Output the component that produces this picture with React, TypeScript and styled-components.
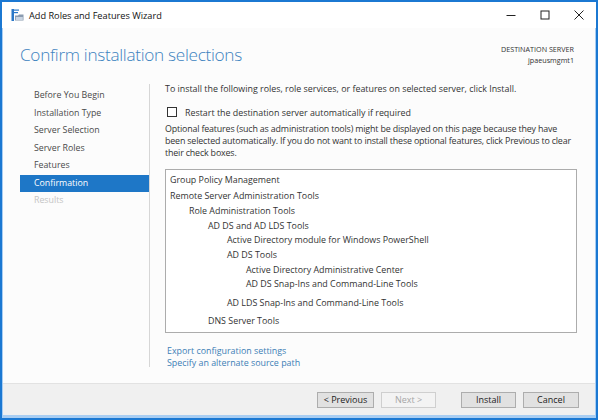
import React from 'react';
import styled, { createGlobalStyle } from 'styled-components';

const GlobalStyle = createGlobalStyle`
  html, body {
    margin: 0;
    padding: 0;
    background: #ffffff;
  }
  body {
    font-family: 'Open Sans', 'Noto Sans', 'Liberation Sans', sans-serif;
  }
`;

const Frame = styled.div`
  width: 598px;
  height: 420px;
  box-sizing: border-box;
  border: 2px solid #1b78d2;
  display: flex;
  flex-direction: column;
  background: #ffffff;
`;

const TitleBar = styled.div`
  height: 26px;
  flex: none;
  display: flex;
  align-items: center;
  background: #ffffff;
  padding-left: 9px;
`;

const TitleText = styled.span`
  font-size: 9.2px;
  color: #111111;
  margin-left: 5px;
`;

const WindowControls = styled.div`
  margin-left: auto;
  display: flex;
  height: 100%;
`;

const ControlButton = styled.div`
  width: 34px;
  height: 100%;
  display: flex;
  align-items: center;
  justify-content: center;
`;

const Window = styled.div`
  flex: 1;
  display: flex;
  flex-direction: column;
  border: 1px solid #a8cdf2;
  border-top: none;
  border-bottom-width: 3px;
  min-height: 0;
`;

const Header = styled.div`
  height: 48px;
  flex: none;
  display: flex;
  align-items: flex-start;
  justify-content: space-between;
  padding: 0 21px 0 17px;
  background: #fcfcfc;
`;

const PageTitle = styled.h1`
  margin: 15px 0 0;
  font-size: 17.2px;
  font-weight: 300;
  letter-spacing: -0.3px;
  color: #3d83bf;
  line-height: 24px;
`;

const Destination = styled.div`
  margin-top: 16px;
  text-align: right;
  font-size: 7.2px;
  line-height: 11px;
  color: #333333;
`;

const Main = styled.div`
  flex: 1;
  display: flex;
  background: #fcfcfc;
  min-height: 0;
`;

const Nav = styled.nav`
  width: 146px;
  flex: none;
  padding-top: 11px;
  box-sizing: border-box;
`;

const NavItem = styled.div<{ $active?: boolean; $disabled?: boolean }>`
  margin-left: 17px;
  padding-left: 14px;
  height: 17.5px;
  line-height: 17.5px;
  font-size: 8.8px;
  background: ${({ $active }) => ($active ? '#1e77c7' : 'transparent')};
  color: ${({ $active, $disabled }) =>
    $active ? '#ffffff' : $disabled ? '#c4c4c4' : '#4a4a4a'};
`;

const Divider = styled.div`
  width: 1px;
  flex: none;
  background: #d6d6d6;
  margin: 8px 0 16px;
`;

const Content = styled.div`
  flex: 1;
  padding: 7px 18px 0 15px;
  font-size: 8.9px;
  color: #333333;
  min-width: 0;
`;

const Line = styled.div`
  line-height: 12px;
  white-space: nowrap;
`;

const CheckRow = styled.label`
  display: flex;
  align-items: center;
  height: 12px;
  margin-top: 11px;
  padding-left: 2px;
`;

const CheckBox = styled.span`
  width: 8px;
  height: 8px;
  border: 1px solid #333333;
  background: #ffffff;
  margin-right: 8px;
`;

const Paragraph = styled.p`
  margin: 5px 0 0;
  line-height: 12px;
  letter-spacing: -0.17px;
`;

const ListBox = styled.div`
  margin-top: 10px;
  height: 164px;
  box-sizing: border-box;
  border: 1px solid #acacac;
  background: #ffffff;
  padding: 3px 0 0 4px;
`;

const Node = styled.div<{ $top?: boolean }>`
  margin-bottom: ${({ $top }) => ($top ? '1.5px' : '0')};
`;

const NodeLabel = styled.div`
  height: 14.7px;
  line-height: 14.7px;
  white-space: nowrap;
`;

const Children = styled.div`
  padding-left: 19px;
  padding-bottom: 3.5px;
`;

const Links = styled.div`
  margin-top: 12px;
  padding-left: 2px;
`;

const Link = styled.a`
  display: block;
  line-height: 12px;
  color: #3c7fb6;
  text-decoration: none;
`;

const Footer = styled.div`
  height: 32px;
  flex: none;
  box-sizing: border-box;
  border-top: 1px solid #e2e2e2;
  background: #f0f0f0;
  display: flex;
  align-items: center;
  justify-content: flex-end;
  padding-right: 16px;
`;

const Button = styled.button<{ $width: number; $gap: number }>`
  width: ${({ $width }) => $width}px;
  height: 16px;
  margin-left: ${({ $gap }) => $gap}px;
  padding: 0;
  box-sizing: border-box;
  border: 1px solid #adadad;
  background: #e1e1e1;
  font-family: inherit;
  font-size: 9px;
  line-height: 14px;
  color: #222222;
  &:disabled {
    border-color: #cfcfcf;
    background: #f3f3f3;
    color: #a6a6a6;
  }
`;

interface TreeNode {
  label: string;
  children?: TreeNode[];
}

const tree: TreeNode[] = [
  { label: 'Group Policy Management' },
  {
    label: 'Remote Server Administration Tools',
    children: [
      {
        label: 'Role Administration Tools',
        children: [
          {
            label: 'AD DS and AD LDS Tools',
            children: [
              { label: 'Active Directory module for Windows PowerShell' },
              {
                label: 'AD DS Tools',
                children: [
                  { label: 'Active Directory Administrative Center' },
                  { label: 'AD DS Snap-Ins and Command-Line Tools' },
                ],
              },
              { label: 'AD LDS Snap-Ins and Command-Line Tools' },
            ],
          },
          { label: 'DNS Server Tools' },
        ],
      },
    ],
  },
];

const steps = [
  'Before You Begin',
  'Installation Type',
  'Server Selection',
  'Server Roles',
  'Features',
  'Confirmation',
  'Results',
];

const TreeItem: React.FC<{ node: TreeNode; top?: boolean }> = ({ node, top }) => (
  <Node $top={top}>
    <NodeLabel>{node.label}</NodeLabel>
    {node.children && (
      <Children>
        {node.children.map((child) => (
          <TreeItem key={child.label} node={child} />
        ))}
      </Children>
    )}
  </Node>
);

const WizardIcon = () => (
  <svg width="13" height="12" viewBox="0 0 13 12">
    <rect x="0.5" y="0" width="2.5" height="12" fill="#2a78c8" />
    <rect x="3" y="0.5" width="5" height="1.2" fill="#2a78c8" />
    <rect x="3" y="3" width="4" height="1.2" fill="#2a78c8" />
    <path d="M4 6.5h3l1-1h4.5v6H4z" fill="#8a9bb0" />
    <path d="M4.8 8h7v3h-7z" fill="#c9d5e3" />
  </svg>
);

export default function App() {
  return (
    <>
      <GlobalStyle />
      <Frame>
        <TitleBar>
          <WizardIcon />
          <TitleText>Add Roles and Features Wizard</TitleText>
          <WindowControls>
            <ControlButton>
              <svg width="10" height="10" viewBox="0 0 10 10">
                <path d="M0.5 5.5h9" stroke="#222" strokeWidth="1" />
              </svg>
            </ControlButton>
            <ControlButton>
              <svg width="10" height="10" viewBox="0 0 10 10">
                <rect x="1" y="1" width="8" height="8" fill="none" stroke="#222" strokeWidth="1" />
              </svg>
            </ControlButton>
            <ControlButton>
              <svg width="10" height="10" viewBox="0 0 10 10">
                <path d="M0.5 0.5l9 9M9.5 0.5l-9 9" stroke="#222" strokeWidth="1" />
              </svg>
            </ControlButton>
          </WindowControls>
        </TitleBar>
        <Window>
          <Header>
            <PageTitle>Confirm installation selections</PageTitle>
            <Destination>
              DESTINATION SERVER
              <br />
              jpaeusmgmt1
            </Destination>
          </Header>
          <Main>
            <Nav>
              {steps.map((step) => (
                <NavItem
                  key={step}
                  $active={step === 'Confirmation'}
                  $disabled={step === 'Results'}
                >
                  {step}
                </NavItem>
              ))}
            </Nav>
            <Divider />
            <Content>
              <Line>
                To install the following roles, role services, or features on selected server, click
                Install.
              </Line>
              <CheckRow>
                <CheckBox />
                Restart the destination server automatically if required
              </CheckRow>
              <Paragraph>
                Optional features (such as administration tools) might be displayed on this page
                because they have been selected automatically. If you do not want to install these
                optional features, click Previous to clear their check boxes.
              </Paragraph>
              <ListBox>
                {tree.map((node) => (
                  <TreeItem key={node.label} node={node} top />
                ))}
              </ListBox>
              <Links>
                <Link href="#">Export configuration settings</Link>
                <Link href="#">Specify an alternate source path</Link>
              </Links>
            </Content>
          </Main>
          <Footer>
            <Button $width={57} $gap={0}>&lt; Previous</Button>
            <Button $width={55} $gap={7} disabled>
              Next &gt;
            </Button>
            <Button $width={55} $gap={25}>Install</Button>
            <Button $width={56} $gap={7}>Cancel</Button>
          </Footer>
        </Window>
      </Frame>
    </>
  );
}
